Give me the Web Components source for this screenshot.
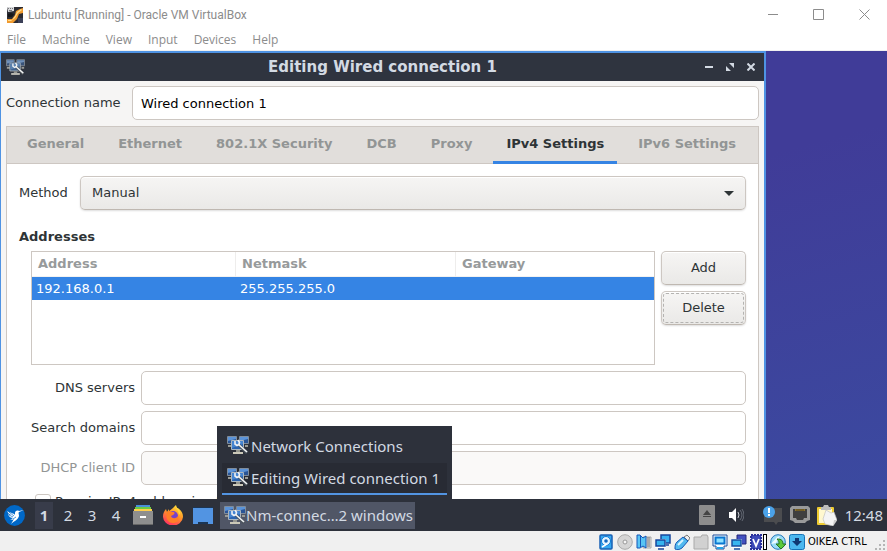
<!DOCTYPE html>
<html lang="en">
<head>
<meta charset="utf-8">
<title>Lubuntu [Running] - Oracle VM VirtualBox</title>
<style>
html, body { margin: 0; height: 100%; }
body { font: 13px/16px "DejaVu Sans", sans-serif; color: #2e3436; overflow: hidden; }
</style>
</head>
<body>
<vm-window>
  <host-titlebar slot="title">Lubuntu [Running] - Oracle VM VirtualBox</host-titlebar>
  <host-menubar slot="menu" items="File,Machine,View,Input,Devices,Help"></host-menubar>
  <guest-window heading="Editing Wired connection 1">
    <form-field label="Connection name" value="Wired connection 1" style="--label-width:114px;--gap:12px"></form-field>
    <tab-notebook tabs="General,Ethernet,802.1X Security,DCB,Proxy,IPv4 Settings,IPv6 Settings" active="5">
      <ipv4-page></ipv4-page>
    </tab-notebook>
  </guest-window>
  <guest-panel slot="panel"></guest-panel>
  <host-statusbar slot="status"></host-statusbar>
</vm-window>

<script>
const NET = `
  <path d="M.5.500h9v7h-9z" fill="#2a5596" stroke="#7f8c9b"/><path d="M1 1h8v2L1 5z" fill="#5b93d8"/>
  <path d="M12.500.5h9v7h-9z" fill="#2a5596" stroke="#7f8c9b"/><path d="M13 1h8v2l-8 2z" fill="#5b93d8"/>
  <path d="M1 9h4v2H1zM18 9h3v2h-3z" fill="#9a9c96"/>
  <path d="M4.500 4.500h12v9h-12z" fill="#2c64ae" stroke="#aab6c0"/><path d="M5 5h11v3L5 12z" fill="#4584d0"/>
  <path d="M9 14h4v2H9z" fill="#96978f"/><path d="M6 16h10v2H6z" fill="#cbc8b8"/>
  <path d="M12 9l8 8" stroke="#4c545c" stroke-width="3"/><path d="M11 8l9 8" stroke="#f1f3f5" stroke-width="1.600"/>
  <path d="M8 5v3l2 1.500 2-1 .5-2L11 4" fill="none" stroke="#eef1f4" stroke-width="1.600"/>`;
const ICONS = {
  network: ['0 0 22 19', NET],
  vbox: ['0 0 16 16', `<path d="M0 0h16v16H0z" fill="#2c2c33"/><path d="M0 12h5l3-4 1-4 4-2 3-1v5l-4 1-2 5-4 4H0z" fill="#f09a2e"/><path d="M1 13h4l3-4 2-4 4-3 1 1-4 3-3 5-4 3H1z" fill="#ffdc8c"/><path d="M0 0h7v4L1 5z" fill="#d9dadd"/><path d="M1 1h1v1H1zM3 1h1v1H3zM5 1h1v1H5zM2 3h3v1H2z" fill="#777"/><path d="M11 11h5v5h-5z" fill="#3b4057"/><path d="M1 7l3-1 3 1-2 3H1z" fill="#171719"/>`],
  lubuntu: ['0 0 21 21', `<circle cx="10.500" cy="10.500" r="10.400" fill="#0068c8"/><path d="M20 5l-5 1c-2-1-4 0-4 2v2C10 8 6 8 3 6c1 2 2 3 4 4-1 0-2 0-3-1 1 3 3 4 5 4-1 1-2 1-3 1 2 1 3 1 4 0l-3 5c3-3 7-4 8-8 0-2-1-3 0-4z" fill="#fff"/><path d="M5 7l5 4M5 10l4 2M9 14l3-2" stroke="#0068c8" stroke-width=".7" fill="none"/>`],
  files: ['0 0 20 20', `<path d="M3 0h14v2H3z" fill="#4a90d9"/><path d="M2 2h16v2H2z" fill="#6ccb43"/><path d="M1 4h18v3H1z" fill="#ffcf4d"/><path d="M0 6h20v13H0z" fill="#8e8e8e"/><path d="M0 19h20v1H0z" fill="#666"/><path d="M7 11h6v2H7z" fill="#fff"/>`],
  firefox: ['0 0 20 20', `<defs><linearGradient id="f" x1=".8" y1="0" x2=".3" y2="1"><stop offset="0" stop-color="#ffe83e"/><stop offset=".45" stop-color="#ff9828"/><stop offset="1" stop-color="#ff2f62"/></linearGradient></defs><path d="M13 0c0 2 1 3 3 4 3 2 4 5 4 8a10 9 0 0 1-20-1c0-2 1-5 3-7l1 3 2-3v2c2-1 4-3 7-6z" fill="url(#f)"/><circle cx="10" cy="11" r="5" fill="#7542ce"/><path d="M4 7c3-2 4 0 6 0 2 0 2 2 0 3l-2 1c1 3 5 3 7 0 2 5-2 7-5 7-5 0-8-5-6-11z" fill="#ff7f27"/><path d="M13 0c-1 4 3 5 3 10 2-2 1-4 0-6-2-1-3-2-3-4z" fill="#ffd83c"/>`],
  desktop: ['0 0 20 17', `<path d="M0 1h20v16h-5v-2H5v2H0z" fill="#5294e2"/><path d="M0 0h20v1H0zM5 15h10v2H5z" fill="#1c3553"/>`],
  eject: ['0 0 16 20', `<rect width="16" height="20" rx="1" fill="#8d8d8d"/><path d="M4 10l4-5 4 5zM4 11h8v1H4z" fill="#444"/>`],
  volume: ['0 0 15 14', `<path d="M0 4h3l4-4v14l-4-4H0z" fill="#fff"/><path d="M9 4q2 3 0 6" fill="none" stroke="#c9ccd2"/><path d="M11 2q4 5 0 10M13 1q4 6 0 12" fill="none" stroke="#666b76"/>`],
  notice: ['0 0 20 19', `<path d="M1 2h18v14h-4l-2 3-2-3H1z" fill="#4b4c4f"/><circle cx="6" cy="6" r="6" fill="#4ba2e8"/><path d="M5 2h2v5H5zM5 8h2v2H5z" fill="#fff"/>`],
  wired: ['0 0 20 18', `<path d="M2 0h16l2 2v12l-3 1-2 2H5l-2-2-3-1V2z" fill="#9a9a9a"/><path d="M3 3h14v9h-3l-1 2H7l-1-2H3z" fill="#3f3f3f"/><path d="M5 3h10v2H5z" fill="#8e732b"/><path d="M7 3v2M9 3v2M11 3v2M13 3v2" stroke="#55471f"/>`],
  clip: ['0 0 20 21', `<rect x="0" y="2" width="17" height="18" rx="1" fill="#eecb31"/><path d="M2 4h13v14H2z" fill="#fff8cf"/><path d="M4 2h2l1-2h4l1 2h2v3H4z" fill="#bcbcbc"/><path d="M9 5l5 3 3-1 3 8-4 6-8-2-2-5z" fill="#f4f4f4" stroke="#bbb" stroke-width=".6"/><path d="M16 20l1-5h3z" fill="#ccc"/>`],
  disk: ['0 0 16 16', `<rect x="2" y="1" width="12" height="14" rx="1" fill="#36a9f0" stroke="#1960b4" stroke-width="1.500"/><circle cx="8" cy="7" r="4.500" fill="#e3f5ff" stroke="#0b78d6"/><circle cx="8" cy="7" r="1.800" fill="#1468c0"/><path d="M4 13l5-3" stroke="#fff" stroke-width="1.500"/>`],
  disc: ['0 0 16 16', `<circle cx="8" cy="8" r="7.300" fill="#d5d5d5" stroke="#aaa"/><circle cx="8" cy="8" r="2" fill="#f5f5f5" stroke="#999"/>`],
  audio: ['0 0 16 16', `<path d="M7 3h8v11H7z" fill="#ddd" stroke="#aaa"/><path d="M11 4h3M11 6h3M11 8h3M11 10h3M11 12h3" stroke="#777"/><path d="M1 1h3l3 3 3-2v12l-3-2-3 2H1z" fill="#58c5f5" stroke="#1557b8"/><path d="M4.500 2v11" stroke="#1557b8"/>`],
  lan: ['0 0 16 16', `<path d="M6 1h9v8H6zM9 11h5" fill="#36b0f0" stroke="#17459c" stroke-width="1.500"/><path d="M0 5h11v9H0z" fill="#fff"/><path d="M1 6h9v6H1zM3 15h6" fill="#35b3ef" stroke="#17459c" stroke-width="1.500"/>`],
  usb: ['0 0 16 16', `<path d="M10 3l3-2 3 3-2 3z" fill="#eee" stroke="#777"/><path d="M9 3l5 4-6 7c-3 2-5 2-7 1 0-3 0-5 2-7z" fill="#52b9ef" stroke="#1558b4"/><path d="M4 11l5-5" stroke="#d5f3ff" stroke-width="2"/>`],
  folder: ['0 0 16 16', `<path d="M1 3h7l1-2h5l1 2v12H1z" fill="#d1d1d1" stroke="#aaa"/>`],
  display: ['0 0 16 16', `<path d="M1 1h14v11h-3v3H4v-3H1z" fill="#fff" stroke="#184a9a"/><path d="M3.500 3.500h9v6h-9z" fill="#8de1ff" stroke="#0876d1" stroke-width="2"/><path d="M5 14h6" stroke="#24a1e6" stroke-width="2"/>`],
  record: ['0 0 16 16', `<path d="M6 1h9v9H6z" fill="#4351c0" stroke="#242776"/><path d="M0 5h11v9H0z" fill="#fff"/><path d="M1 6h9v6H1zM3 15h6" fill="#38b6ef" stroke="#174e9e" stroke-width="1.500"/>`],
  cpu: ['0 0 12 16', `<path d="M1 1h10v14H1z" fill="#3c49b8" stroke="#29309b" stroke-width="2" stroke-dasharray="2 1"/><path d="M3 5l3 7 3-7" fill="none" stroke="#fff" stroke-width="1.800"/>`],
  mouse: ['0 0 16 16', `<circle cx="8" cy="8" r="7.300" fill="#9bdcf6" stroke="#2677bb"/><path d="M1 10l6-7 3-1-4 7z" fill="#eefaff"/><path d="M7 5c5 0 6 2 6 5h3l-5 5-5-5h3c0-2 0-3-2-5z" fill="#5cc93b" stroke="#267327"/>`],
  hostkey: ['0 0 16 16', `<rect x=".5" y=".5" width="15" height="15" rx="2" fill="#4bb7ef" stroke="#1773b8"/><path d="M6 4h4v3h3l-5 5-5-5h3z" fill="#103873"/>`]
};

/* Base class: renders html() into an open shadow root. */
class Part extends HTMLElement {
  connectedCallback() {
    if (this.shadowRoot) return;
    const t = document.createElement('template');
    t.innerHTML = '<style>*{box-sizing:border-box}button,a,input,select{font:inherit;color:inherit}</style>' + this.html();
    this.attachShadow({ mode: 'open' }).append(t.content.cloneNode(true));
  }
}

customElements.define('app-icon', class extends Part {
  html() {
    const [box, art] = ICONS[this.getAttribute('name')];
    const [, , w, h] = box.split(' ');
    return `<style>:host{display:block;flex:none;width:${w}px;height:${h}px}svg{display:block;width:100%;height:100%}</style>
      <svg viewBox="${box}" aria-hidden="true">${art}</svg>`;
  }
});

customElements.define('vm-window', class extends Part {
  html() {
    return `<style>
      :host{display:flex;flex-direction:column;height:100vh;background:#fff}
      main{flex:1;min-height:0;overflow:hidden;display:flex;padding-right:121px;background:linear-gradient(165deg,#403c98 45%,#3b4aa0)}
    </style><slot name="title"></slot><slot name="menu"></slot><main><slot></slot></main><slot name="panel"></slot><slot name="status"></slot>`;
  }
});

customElements.define('host-titlebar', class extends Part {
  html() {
    return `<style>
      :host{display:flex;align-items:center;height:29px;padding-left:7px;gap:5px;font:12px/16px Roboto,sans-serif;color:#8c8c8c}
      span{flex:1;white-space:nowrap}
      button{width:46px;height:29px;padding:0;border:0;background:none;display:grid;place-items:center;flex:none}
      svg{width:11px;height:11px;fill:none;stroke:#8c8c8c}
      nav{display:flex}
    </style><app-icon name="vbox"></app-icon><span><slot></slot></span><nav>
      <button aria-label="Minimize"><svg viewBox="0 0 11 11"><path d="M1 5.500h10"/></svg></button>
      <button aria-label="Maximize"><svg viewBox="0 0 11 11"><path d="M.5.5h10v10H.5z"/></svg></button>
      <button aria-label="Close"><svg viewBox="0 0 11 11"><path d="M.5.5l10 10M10.500.5l-10 10"/></svg></button></nav>`;
  }
});

customElements.define('host-menubar', class extends Part {
  html() {
    return `<style>
      :host{display:flex;align-items:flex-end;gap:16px;height:22px;padding-left:7px;font:12px/20px "Open Sans",sans-serif;color:#8c8c8c;border-bottom:1px solid #f0f0f0;box-sizing:border-box}
      button{border:0;padding:0;background:none}
    </style>` + this.getAttribute('items').split(',').map(i => `<button>${i}</button>`).join('');
  }
});

customElements.define('guest-window', class extends Part {
  html() {
    return `<style>
      :host{flex:1;min-width:0;min-height:0;display:flex;flex-direction:column;border:solid #4f93e3;border-width:2px 2px 0 1px;background:#f6f5f4}
      header{flex:none;display:grid;grid-template-columns:68px 1fr 68px;align-items:center;height:28px;background:#2f343f;color:#d3dae3}
      header app-icon{margin-left:5px;width:19px;height:17px;filter:saturate(.6)}
      h1{margin:0;font:bold 15px/18px "DejaVu Sans",sans-serif;text-align:center;white-space:nowrap}
      nav{display:flex;justify-content:flex-end;padding-right:3px}
      button{width:21px;height:24px;padding:0;border:0;background:none;display:grid;place-items:center}
      svg{width:8px;height:8px;fill:none;stroke:#d3dae3;stroke-width:2}
      .body{flex:1;min-height:0;display:flex;flex-direction:column;gap:6px;padding:5px 5px 0}
    </style><header><app-icon name="network"></app-icon><h1>${this.getAttribute('heading')}</h1><nav>
      <button aria-label="Minimize"><svg viewBox="0 0 8 8"><path d="M0 4h8"/></svg></button>
      <button aria-label="Restore"><svg viewBox="0 0 8 8"><path d="M3 0h5v5zM0 3v5h5z" fill="#d3dae3" stroke="none"/></svg></button>
      <button aria-label="Close"><svg viewBox="0 0 8 8"><path d="M.5.5l7 7M7.500.5l-7 7"/></svg></button></nav></header>
      <div class="body"><slot></slot></div>`;
  }
});

customElements.define('form-field', class extends Part {
  html() {
    const off = this.hasAttribute('disabled') ? 'disabled' : '';
    return `<style>
      :host{display:flex;align-items:center;gap:var(--gap,6px)}
      label{flex:none;width:var(--label-width,104px);text-align:var(--label-align,left);white-space:nowrap}
      label.disabled{color:#929595}
      input{flex:1;min-width:0;height:34px;padding:0 8px;border:1px solid #cdc7c2;border-radius:5px;background:#fff;color:#000;outline:0}
      input:disabled{background:#faf9f8}
    </style><label for="f" class="${off}">${this.getAttribute('label')}</label><input id="f" type="text" value="${this.getAttribute('value') || ''}" ${off}>`;
  }
});

customElements.define('tab-notebook', class extends Part {
  html() {
    const active = +this.getAttribute('active');
    return `<style>
      :host{flex:1;min-height:0;display:flex;flex-direction:column;border:1px solid #cdc7c2;border-bottom:0;background:#fff}
      [role=tablist]{flex:none;display:flex;gap:8px;height:37px;padding-left:7px;background:#e1dedb;box-shadow:inset 0 -1px #cdc7c2}
      button{padding:0 13px;border:0;border-bottom:3px solid transparent;background:none;font-weight:bold;color:#929595;white-space:nowrap}
      button[aria-selected=true]{color:#2e3436;border-color:#3584e4}
    </style><div role="tablist">${this.getAttribute('tabs').split(',').map((t, i) =>
      `<button role="tab" aria-selected="${i === active}">${t}</button>`).join('')}</div><slot></slot>`;
  }
});

customElements.define('address-table', class extends Part {
  html() {
    return `<style>
      :host{display:block;border:1px solid #cdc7c2;background:#fff}
      table{width:100%;table-layout:fixed;border-collapse:separate;border-spacing:0}
      th,td{padding:0 4px;text-align:left}
      th{height:25px;padding:0 6px;color:#979a9b;border-bottom:1px solid #f3f2f1}
      th:not(:last-child){border-right:1px solid #eeedec}
      td{height:23px;background:#3584e4;color:#fff}
      .address{width:204px}.netmask{width:220px}
    </style><table><thead><tr><th class="address">Address</th><th class="netmask">Netmask</th><th>Gateway</th></tr></thead>
    <tbody><tr><td>192.168.0.1</td><td>255.255.255.0</td><td></td></tr></tbody></table>`;
  }
});

customElements.define('ipv4-page', class extends Part {
  html() {
    return `<style>
      :host{display:block;flex:1;min-height:0;overflow:hidden;padding:12px}
      .method{display:flex;align-items:center;gap:12px}
      .method label{flex:none;width:49px}
      .box{flex:1;display:grid;align-items:center}
      .box>*{grid-area:1/1}
      .box svg{justify-self:end;margin-right:12px;width:10px;height:5px;pointer-events:none}
      select,button{height:34px;border:1px solid #cdc7c2;border-bottom-color:#bfb8b1;border-radius:5px;background:linear-gradient(#f6f5f4,#eae9e7);box-shadow:inset 0 1px #fff,0 1px 2px #0002}
      select{width:100%;appearance:none;padding:0 11px}
      h2{font-size:13px;line-height:16px;margin:19px 0 6px}
      .form{margin-left:12px;display:grid;gap:6px;--label-align:right}
      .addresses{display:grid;grid-template-columns:1fr 85px;gap:6px}
      .actions{display:grid;gap:6px;align-content:start;padding-bottom:40px}
      button.focus{outline:1px dashed #b4b3b1;outline-offset:-3px}
      .check{display:flex;align-items:center;gap:4px;margin:3px 0 0 4px;white-space:nowrap}
      .check input{appearance:none;flex:none;width:16px;height:16px;margin:0;border:1px solid #cdc7c2;border-radius:3px;background:#fff}
    </style>
    <div class="method"><label for="m">Method</label><div class="box"><select id="m"><option>Manual</option></select><svg viewBox="0 0 10 5"><path d="M0 0h10L5 5z" fill="#2e3436"/></svg></div></div>
    <h2>Addresses</h2>
    <div class="form">
      <div class="addresses"><address-table></address-table><div class="actions"><button>Add</button><button class="focus">Delete</button></div></div>
      <form-field label="DNS servers"></form-field>
      <form-field label="Search domains"></form-field>
      <form-field label="DHCP client ID" disabled></form-field>
      <div class="check"><input id="r" type="checkbox"><label for="r">Require IPv4 addressing for this connection to complete</label></div>
    </div>`;
  }
});

customElements.define('task-group', class extends Part {
  html() {
    return `<style>
      :host{display:block;position:relative}
      button{display:flex;align-items:center;gap:2px;border:0;width:100%;color:#d3dae3;white-space:nowrap;text-align:left}
      .task{height:27px;width:195px;gap:0;padding:0 4px;background:#505666}
      .menu{position:absolute;left:-3px;bottom:100%;margin-bottom:3px;width:235px;padding:5px 5px 4px;background:#2d313b}
      .menu button{height:32px;padding:0 5px;background:none;border-bottom:2px solid transparent}
      .menu .current{background:#282b34;border-color:#5294e2}
    </style><div class="menu"><button><app-icon name="network"></app-icon>Network Connections</button>
    <button class="current"><app-icon name="network"></app-icon>Editing Wired connection 1</button></div>
    <button class="task"><app-icon name="network"></app-icon>Nm-connec…2 windows</button>`;
  }
});

customElements.define('guest-panel', class extends Part {
  html() {
    const tray = { eject: 'Removable media', volume: 'Volume', notice: 'Notifications', wired: 'Network', clip: 'Clipboard' };
    return `<style>
      :host{flex:none;display:flex;align-items:center;height:32px;padding:0 4px;background:#2d313b;color:#d3dae3;font:15px/20px "Noto Sans",sans-serif;position:relative;z-index:1}
      button{padding:0;border:0;background:none;display:grid;place-items:center}
      .desks{display:flex;margin:0 5px 0 7px}
      .desks button{width:24px;height:27px}
      .desks .on{background:#383c4a;font-weight:bold;width:18px;margin:0 3px}
      .launch{display:flex;gap:10px;margin-right:7px}
      .tray{display:flex;align-items:center;margin-left:auto;gap:7px}
      .tray button:nth-child(1){margin-right:7px}
      .tray button:nth-child(2){margin-right:12px}
      time{margin-left:1px}
    </style>
    <button aria-label="Applications"><app-icon name="lubuntu"></app-icon></button>
    <div class="desks"><button class="on">1</button><button>2</button><button>3</button><button>4</button></div>
    <div class="launch">${['files', 'firefox', 'desktop'].map(n => `<button aria-label="${n}"><app-icon name="${n}"></app-icon></button>`).join('')}</div>
    <task-group></task-group>
    <div class="tray">${Object.keys(tray).map(n => `<button aria-label="${tray[n]}"><app-icon name="${n}"></app-icon></button>`).join('')}<time>12:48</time></div>`;
  }
});

customElements.define('host-statusbar', class extends Part {
  html() {
    const left = ['disk', 'disc', 'audio', 'lan', 'usb', 'folder', 'display', 'record'];
    return `<style>
      :host{flex:none;display:flex;align-items:center;justify-content:flex-end;gap:3px;height:20px;padding-top:1px;box-sizing:border-box;background:#f0f0f0;color:#000;font:11px/16px "DejaVu Sans Condensed","DejaVu Sans",sans-serif}
      .cpu{display:flex;gap:1px}
      .cpu i{width:4px;height:16px;border:1px solid #000;background:#fff}
      span{width:64px;white-space:nowrap}
      .grip{width:12px;height:12px;align-self:flex-end;fill:#b5b5b5}
    </style>${left.map(n => `<app-icon name="${n}"></app-icon>`).join('')}
    <div class="cpu"><app-icon name="cpu"></app-icon><i></i></div>
    <app-icon name="mouse"></app-icon><app-icon name="hostkey"></app-icon><span>OIKEA CTRL</span>
    <svg class="grip" viewBox="0 0 12 12"><path d="M8 1h2v2H8zM8 5h2v2H8zM8 9h2v2H8zM4 5h2v2H4zM4 9h2v2H4zM0 9h2v2H0z"/></svg>`;
  }
});
</script>
</body>
</html>
